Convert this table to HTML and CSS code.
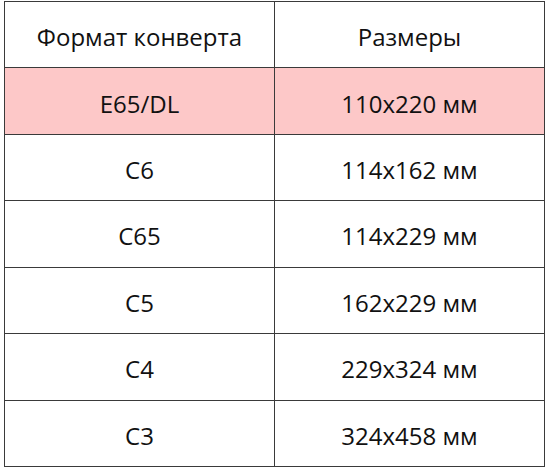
FILE: index.html
```html
<!DOCTYPE html>
<html lang="ru">
<head>
<meta charset="utf-8">
<link rel="stylesheet" href="styles.css">
</head>
<body>
<table class="sizes">
  <tr class="head"><td>Формат конверта</td><td>Размеры</td></tr>
  <tr class="hl"><td>E65/DL</td><td>110x220 мм</td></tr>
  <tr><td>C6</td><td>114x162 мм</td></tr>
  <tr><td>C65</td><td>114x229 мм</td></tr>
  <tr><td>C5</td><td>162x229 мм</td></tr>
  <tr><td>C4</td><td>229x324 мм</td></tr>
  <tr><td>C3</td><td>324x458 мм</td></tr>
</table>
</body>
</html>
```
FILE: styles.css
```css
html, body { margin: 0; padding: 0; background: #fff; }
body { padding: 1px 0 0 4px; }
.sizes {
  border-collapse: collapse;
  width: 541px;
  height: 466px;
  font-family: "Open Sans", "Liberation Sans", sans-serif;
  font-size: 24px;
  color: #111;
}
.sizes td {
  border: 1.5px solid #3a3a3a;
  padding: 4px 0 0 0;
  text-align: center;
  vertical-align: middle;
  width: 50%;
}
.sizes tr + tr td { border-top-color: #8a8a8a; }
.hl td { background: #fdc8c8; }
.hl + tr td { border-top-color: #3a3a3a; }
```
